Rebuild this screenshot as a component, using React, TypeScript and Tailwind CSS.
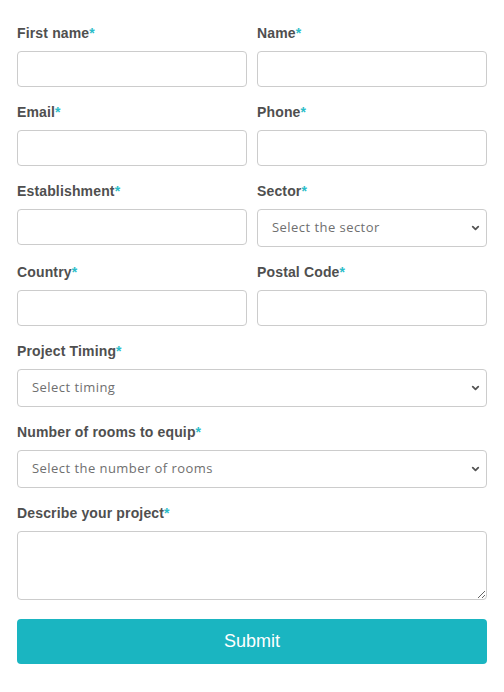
import { ChevronDown } from 'lucide-react';

type Field = {
  label: string;
  kind: 'input' | 'select';
  placeholder?: string;
};

const pairs: Field[][] = [
  [
    { label: 'First name', kind: 'input' },
    { label: 'Name', kind: 'input' },
  ],
  [
    { label: 'Email', kind: 'input' },
    { label: 'Phone', kind: 'input' },
  ],
  [
    { label: 'Establishment', kind: 'input' },
    { label: 'Sector', kind: 'select', placeholder: 'Select the sector' },
  ],
  [
    { label: 'Country', kind: 'input' },
    { label: 'Postal Code', kind: 'input' },
  ],
];

function Label({ text }: { text: string }) {
  return (
    <label className="block text-[14px] leading-[20px] font-bold text-[#4f4f4f] tracking-[0.15px] mb-2">
      {text}
      <span className="text-[#2bbdc9]">*</span>
    </label>
  );
}

function SelectBox({ placeholder }: { placeholder: string }) {
  return (
    <div className="relative">
      <select
        defaultValue=""
        className="w-full h-[38px] appearance-none bg-white border border-[#cccccc] rounded-[4px] pl-[14px] pr-8 text-[13px] text-[#6f6f6f] font-['Open_Sans',sans-serif] tracking-[0.45px] outline-none"
      >
        <option value="">{placeholder}</option>
      </select>
      <ChevronDown
        className="absolute right-[6px] top-1/2 -translate-y-1/2 w-[11px] h-[11px] text-[#555] pointer-events-none"
        strokeWidth={4}
      />
    </div>
  );
}

export default function App() {
  return (
    <div className="min-h-screen bg-white font-['Liberation_Sans',Arial,sans-serif]">
      <form className="px-[17px] pt-[23px] flex flex-col gap-[15px]">
        {/* Two-column rows */}
        {pairs.map((row, i) => (
          <div key={i} className="grid grid-cols-2 gap-x-[10px] items-start">
            {row.map((f) => (
              <div key={f.label}>
                <Label text={f.label} />
                {f.kind === 'input' ? (
                  <input
                    type="text"
                    className="w-full h-[36px] border border-[#cccccc] rounded-[4px] bg-white px-3 outline-none"
                  />
                ) : (
                  <SelectBox placeholder={f.placeholder || ''} />
                )}
              </div>
            ))}
          </div>
        ))}

        <div>
          <Label text="Project Timing" />
          <SelectBox placeholder="Select timing" />
        </div>

        <div>
          <Label text="Number of rooms to equip" />
          <SelectBox placeholder="Select the number of rooms" />
        </div>

        <div>
          <Label text="Describe your project" />
          <textarea className="block w-full h-[69px] border border-[#cccccc] rounded-[4px] bg-white px-3 py-2 outline-none" />
        </div>

        <button
          type="button"
          className="mt-[4px] w-full h-[45px] rounded-[4px] bg-[#1ab5c1] text-white text-[18px]"
        >
          Submit
        </button>
      </form>
    </div>
  );
}
